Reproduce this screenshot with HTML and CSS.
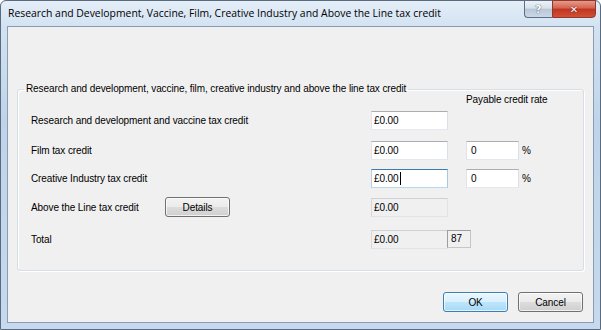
FILE: index.html
```html
<!DOCTYPE html>
<html lang="en-GB">
<head>
    <meta charset="UTF-8">
    <title>Research and Development, Vaccine, Film, Creative Industry and Above the Line tax credit</title>
    <link rel="stylesheet" href="styles.css">
</head>
<body>

    <div class="window">
        <!-- Barra de título -->
        <div class="titlebar">
            <span class="title">Research and Development, Vaccine, Film, Creative Industry and Above the Line tax credit</span>
            <div class="caption-buttons">
                <button class="cap help" aria-label="Help">?</button>
                <button class="cap close" aria-label="Close">&#x2715;</button>
            </div>
        </div>

        <div class="client">
            <fieldset class="group">
                <legend>Research and development, vaccine, film, creative industry and above the line tax credit</legend>

                <div class="rate-head">Payable credit rate</div>

                <div class="row r1">
                    <div class="label">Research and development and vaccine tax credit</div>
                    <div class="textbox">£0.00</div>
                </div>

                <div class="row r2">
                    <div class="label">Film tax credit</div>
                    <div class="textbox">£0.00</div>
                    <div class="textbox rate">0</div>
                    <span class="pct">%</span>
                </div>

                <div class="row r3">
                    <div class="label">Creative Industry tax credit</div>
                    <div class="textbox focused">£0.00<span class="caret"></span></div>
                    <div class="textbox rate">0</div>
                    <span class="pct">%</span>
                </div>

                <div class="row r4">
                    <div class="label">
                        <span class="label-text">Above the Line tax credit</span>
                        <button class="btn details">Details</button>
                    </div>
                    <div class="textbox readonly">£0.00</div>
                </div>

                <div class="row r5">
                    <div class="label">Total</div>
                    <div class="textbox readonly">£0.00</div>
                    <div class="count">87</div>
                </div>
            </fieldset>

            <div class="actions">
                <button class="btn default">OK</button>
                <button class="btn">Cancel</button>
            </div>
        </div>
    </div>

</body>
</html>
```

FILE: styles.css
```css
body {
    margin: 0;
    font-family: 'Liberation Sans', Arial, sans-serif;
    font-size: 10px;
    letter-spacing: -0.1px;
    color: #000;
}

/* Moldura da janela */
.window {
    width: 601px;
    height: 330px;
    box-sizing: border-box;
    border: 1px solid #5b6b7e;
    border-radius: 6px 6px 0 0;
    padding: 0 6px 6px 6px;
    background: linear-gradient(to bottom, #e4eef8 0, #d3e2f2 26px, #bfd4ea 120px, #c6d9ee 100%);
    display: flex;
    flex-direction: column;
}

.titlebar {
    height: 25px;
    flex-shrink: 0;
    display: flex;
    justify-content: space-between;
    align-items: flex-start;
}

.title {
    padding-left: 1px;
    line-height: 25px;
    font-family: 'Open Sans', 'Noto Sans', sans-serif;
    font-size: 10.4px;
    letter-spacing: 0;
    color: #000;
    white-space: nowrap;
}

.caption-buttons {
    display: flex;
    margin-top: -1px;
    margin-right: -2px;
}

.cap {
    height: 18px;
    padding: 0;
    border: 1px solid #5e6f84;
    font-family: 'DejaVu Sans', sans-serif;
    font-weight: bold;
    color: #fff;
    cursor: pointer;
}

.help {
    width: 28px;
    border-right: none;
    border-radius: 0 0 0 4px;
    font-size: 11px;
    background: linear-gradient(to bottom, #eef2f7 0%, #d8e1eb 45%, #b8c7d8 50%, #cad7e5 100%);
    text-shadow: 0 0 1px #44546a, 0 0 1px #44546a;
}

.close {
    width: 44px;
    border-radius: 0 0 4px 0;
    border-color: #8a3a2e;
    font-size: 10px;
    background: linear-gradient(to bottom, #e89a88 0%, #d4624f 45%, #bf3520 50%, #d24f36 100%);
    text-shadow: 0 0 1px #5a1a10, 0 0 1px #5a1a10;
}

/* Área do cliente */
.client {
    flex: 1;
    border: 1px solid #8a9cb1;
    background-color: #f0f0f0;
    display: flex;
    flex-direction: column;
}

.group {
    margin: 55px 9px 0 9px;
    padding: 0 0 21px 6px;
    border: 1px solid #d5dfe5;
    border-radius: 3px;
    box-shadow: 1px 1px 0 #fff, inset 1px 1px 0 #fff;
    min-width: 0;
}

.group legend {
    padding: 0 2px;
    line-height: 14px;
}

.rate-head {
    height: 14px;
    line-height: 14px;
    margin-top: -3px;
    padding-left: 442px;
}

.row {
    display: flex;
    align-items: center;
    height: 20px;
    padding-left: 7px;
}

.r1 { margin-top: 3px; }
.r2 { margin-top: 10px; }
.r3 { margin-top: 8px; }
.r4 { margin-top: 9px; }
.r5 { margin-top: 12px; }

.label {
    width: 340px;
    flex-shrink: 0;
    display: flex;
    align-items: center;
}

.label-text {
    width: 134px;
}

.textbox {
    width: 77px;
    height: 19px;
    box-sizing: border-box;
    padding-left: 2px;
    line-height: 17px;
    border: 1px solid;
    border-color: #abadb3 #dbdfe6 #e3e9ef #e2e3ea;
    background-color: #fff;
    display: flex;
    align-items: center;
}

.textbox.rate {
    width: 53px;
    margin-left: 18px;
    padding-left: 4px;
}

.textbox.focused {
    border-color: #3d7bad #a4c9e3 #b7d9ed #b5cfe7;
}

.caret {
    width: 1px;
    height: 13px;
    margin-left: 1px;
    background-color: #000;
}

.textbox.readonly {
    background-color: #f0f0f0;
    border-color: #cdd0d4 #e3e3e3 #e3e3e3 #d6d8db;
}

.pct {
    margin-left: 3px;
}

.count {
    width: 24px;
    height: 18px;
    box-sizing: border-box;
    margin-left: -1px;
    padding-left: 3px;
    line-height: 16px;
    border: 1px solid;
    border-color: #9d9d9d #c6c6c6 #c6c6c6 #9d9d9d;
    background-color: #f0f0f0;
}

/* Botões */
.btn {
    width: 65px;
    height: 20px;
    padding: 0;
    border: 1px solid #707070;
    border-radius: 3px;
    background: linear-gradient(to bottom, #f2f2f2 0%, #ebebeb 49%, #dddddd 50%, #cfcfcf 100%);
    box-shadow: inset 0 0 0 1px rgba(255, 255, 255, 0.7);
    font-family: inherit;
    font-size: 10px;
    letter-spacing: -0.1px;
    color: #000;
    cursor: pointer;
}

.btn.default {
    border-color: #3c7fb1;
    background: linear-gradient(to bottom, #eaf6fd 0%, #d9f0fc 49%, #bee6fd 50%, #a7d9f5 100%);
}

.actions {
    display: flex;
    justify-content: flex-end;
    gap: 10px;
    margin-top: 21px;
    padding-right: 10px;
}
```
